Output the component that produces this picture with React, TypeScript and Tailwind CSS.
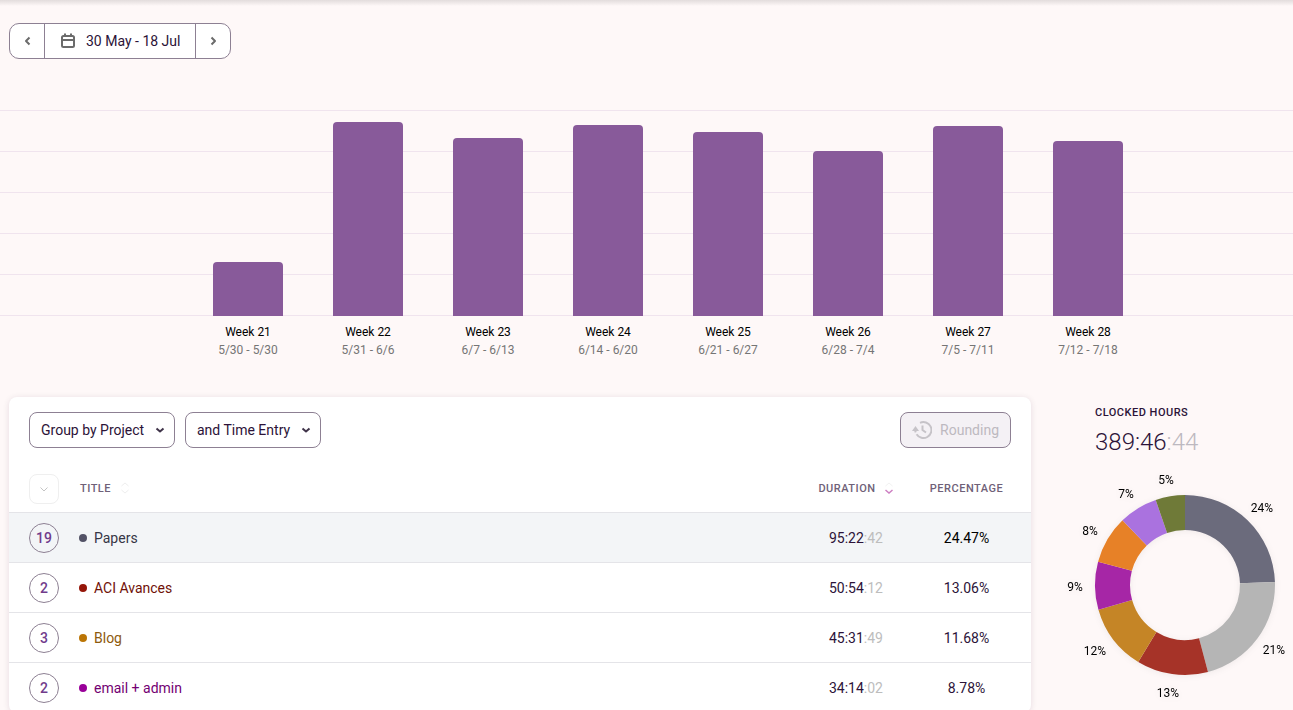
import React from "react";

type Week = { name: string; range: string; height: number };
type Entry = { count: number; title: string; dot: string; text: string; time: string; seconds: string; percent: string; percentColor: string };
type Slice = { label: string; from: number; to: number; color: string; x: number; y: number };

const weeks: Week[] = [
  { name: "Week 21", range: "5/30 - 5/30", height: 54 },
  { name: "Week 22", range: "5/31 - 6/6", height: 194 },
  { name: "Week 23", range: "6/7 - 6/13", height: 178 },
  { name: "Week 24", range: "6/14 - 6/20", height: 191 },
  { name: "Week 25", range: "6/21 - 6/27", height: 184 },
  { name: "Week 26", range: "6/28 - 7/4", height: 165 },
  { name: "Week 27", range: "7/5 - 7/11", height: 190 },
  { name: "Week 28", range: "7/12 - 7/18", height: 175 },
];

const entries: Entry[] = [
  { count: 19, title: "Papers", dot: "bg-[#525266]", text: "text-[#363646]", time: "95:22", seconds: ":42", percent: "24.47%", percentColor: "text-black" },
  { count: 2, title: "ACI Avances", dot: "bg-[#951609]", text: "text-[#701107]", time: "50:54", seconds: ":12", percent: "13.06%", percentColor: "text-[#2c1338]" },
  { count: 3, title: "Blog", dot: "bg-[#bb7505]", text: "text-[#8d5a0d]", time: "45:31", seconds: ":49", percent: "11.68%", percentColor: "text-[#2c1338]" },
  { count: 2, title: "email + admin", dot: "bg-[#990099]", text: "text-[#730073]", time: "34:14", seconds: ":02", percent: "8.78%", percentColor: "text-[#2c1338]" },
];

const slices: Slice[] = [
  { label: "24%", from: 0, to: 88.1, color: "#6b6b7c", x: 231, y: 39 },
  { label: "21%", from: 88.1, to: 165.2, color: "#b5b5b5", x: 243, y: 181 },
  { label: "13%", from: 165.2, to: 211.3, color: "#a63328", x: 137, y: 224 },
  { label: "12%", from: 211.3, to: 254.1, color: "#c58526", x: 64, y: 182 },
  { label: "9%", from: 254.1, to: 285, color: "#a626a6", x: 44, y: 118 },
  { label: "8%", from: 285, to: 316, color: "#e78127", x: 59, y: 62 },
  { label: "7%", from: 316, to: 341, color: "#aa72df", x: 95, y: 25 },
  { label: "5%", from: 341, to: 360, color: "#6f7a38", x: 135, y: 11 },
];

function slicePath(from: number, to: number) {
  const point = (deg: number, r: number) => {
    const a = (deg * Math.PI) / 180;
    return `${(154 + r * Math.sin(a)).toFixed(2)} ${(112 - r * Math.cos(a)).toFixed(2)}`;
  };
  return `M${point(from, 90)}A90 90 0 0 1 ${point(to, 90)}L${point(to, 55)}A55 55 0 0 0 ${point(from, 55)}Z`;
}

function Chevron({ d, className }: { d: string; className: string }) {
  return (
    <svg viewBox="0 0 10 10" className={className} fill="none" stroke="currentColor" strokeLinejoin="round" aria-hidden="true">
      <path d={d} />
    </svg>
  );
}

function DateRange() {
  return (
    <div className="flex h-9 w-max divide-x divide-[#8d8093] overflow-hidden rounded-[10px] border border-[#8d8093] bg-white">
      <button aria-label="Previous period" className="flex w-[35px] items-center justify-center text-[#6b6b6b]">
        <Chevron d="M7.500 1.500 4 5l3.500 3.500" className="size-[10px] stroke-2" />
      </button>
      <button className="flex items-center gap-[10px] px-[15px] text-sm text-[#2c1338]">
        <svg viewBox="0 0 16 16" className="size-4 text-[#6b6b6b]" fill="none" stroke="currentColor" strokeWidth="2" aria-hidden="true">
          <rect x="2" y="3" width="12" height="11" rx="1.500" />
          <path d="M2 7h12M5 0.500v3M11 0.500v3" />
        </svg>
        30 May - 18 Jul
      </button>
      <button aria-label="Next period" className="flex w-[34px] items-center justify-center text-[#6b6b6b]">
        <Chevron d="M3.500 1.500 7 5l-3.500 3.500" className="size-[10px] stroke-2" />
      </button>
    </div>
  );
}

function WeekChart() {
  return (
    <section aria-label="Hours per week" className="mt-[51px] grid">
      <div className="col-start-1 row-start-1 flex flex-col gap-10">
        {[0, 1, 2, 3, 4, 5].map((line) => (
          <div key={line} className="h-px bg-[#f0e4ee]" />
        ))}
      </div>
      <div className="col-start-1 row-start-1 flex justify-center pl-[43px]">
        {weeks.map((week) => (
          <div key={week.name} className="flex w-[120px] flex-col items-center text-xs">
            <div className="flex h-[206px] items-end">
              <div className="w-[70px] rounded-t bg-[#885a9a]" style={{ height: week.height }} />
            </div>
            <div className="mt-[7px] leading-[18px] text-black">{week.name}</div>
            <div className="leading-[18px] text-[#757575]">{week.range}</div>
          </div>
        ))}
      </div>
    </section>
  );
}

function Dropdown({ label, value }: { label: string; value: string }) {
  return (
    <div className="grid items-center">
      <select aria-label={label} className="col-start-1 row-start-1 h-9 appearance-none rounded-[8px] border border-[#8d8093] bg-white pr-[29px] pl-[11px] text-sm text-[#2c1338]">
        <option>{value}</option>
      </select>
      <Chevron d="M1.500 3.500 5 6.500l3.500-3" className="pointer-events-none col-start-1 row-start-1 mr-[10px] size-[10px] justify-self-end stroke-2 text-[#3f3349]" />
    </div>
  );
}

function Toolbar() {
  return (
    <div className="flex gap-[10px] px-5 pt-[15px] pb-[17px]">
      <Dropdown label="Group by" value="Group by Project" />
      <Dropdown label="Then by" value="and Time Entry" />
      <button disabled className="ml-auto flex h-9 items-center gap-2 rounded-[8px] border border-[#8d8093] bg-[#f4f1f5] px-[11px] text-sm text-[#bdb9c0]">
        <svg viewBox="0 0 20 20" className="size-5 text-[#c6c3c8]" fill="none" stroke="currentColor" strokeWidth="2" aria-hidden="true">
          <path d="M8 2.800A8 8 0 1 1 4.600 14.200M3.200 9.500Q3.200 11 3.700 12.300" />
          <path d="M10.500 5.500V10l3.500 2.500" />
          <path d="M3.500 6 0 11h7z" fill="currentColor" stroke="none" />
        </svg>
        Rounding
      </button>
    </div>
  );
}

function EntryTable() {
  return (
    <table className="w-full table-fixed border-separate border-spacing-0 text-sm">
      <thead>
        <tr className="h-12 text-[11px] tracking-[0.5px] text-[#6f6178] *:border-b *:border-[#e4e4e8]">
          <th className="w-[70px] pl-5 text-left">
            <button aria-label="Expand all" className="flex size-[30px] items-center justify-center rounded-[8px] border border-[#efefef] text-[#c4c4c4]">
              <Chevron d="M1.500 3.500 5 7l3.500-3.500" className="size-[10px] stroke-1" />
            </button>
          </th>
          <th className="pl-px text-left font-medium">
            <button className="flex items-center gap-[9px] uppercase">
              Title
              <svg viewBox="0 0 10 12" className="h-3 w-[10px] text-[#eeeeee]" fill="none" stroke="currentColor" aria-hidden="true">
                <path d="M1.500 4 5 1l3.500 3M1.500 8 5 11l3.500-3" />
              </svg>
            </button>
          </th>
          <th className="w-[110px] font-medium">
            <button className="mx-auto flex items-center gap-2 uppercase">
              Duration
              <svg viewBox="0 0 10 12" className="h-3 w-[10px]" fill="none" aria-hidden="true">
                <path d="M1.500 4 5 1l3.500 3" stroke="#f2f2f2" />
                <path d="M1.500 8 5 11l3.500-3" stroke="#cd7fc2" strokeWidth="1.500" />
              </svg>
            </button>
          </th>
          <th className="w-[120px] pr-[9px] text-center font-medium uppercase">Percentage</th>
        </tr>
      </thead>
      <tbody>
        {entries.map((entry) => (
          <tr key={entry.title} className="h-[50px] *:border-b *:border-[#e4e4e8] first:bg-[#f3f5f7]">
            <td className="pl-5">
              <button className="flex size-[30px] items-center justify-center rounded-full border border-[#8d8093] font-medium text-[#713c8c]">{entry.count}</button>
            </td>
            <td>
              <div className={`flex items-center gap-[7px] ${entry.text}`}>
                <span className={`size-2 rounded-full ${entry.dot}`} />
                {entry.title}
              </div>
            </td>
            <td className="text-center text-[#2c1338]">
              {entry.time}
              <span className="text-[#bdbdbd]">{entry.seconds}</span>
            </td>
            <td className={`pr-[9px] text-center ${entry.percentColor}`}>{entry.percent}</td>
          </tr>
        ))}
      </tbody>
    </table>
  );
}

function ClockedHours() {
  return (
    <aside className="w-[262px] shrink-0 pt-[9px]">
      <h2 className="pl-16 text-[11px] leading-[14px] font-medium tracking-[0.5px] text-[#2c1338] uppercase">Clocked hours</h2>
      <p className="mt-2 pl-16 text-2xl leading-7 font-light text-[#2c1338]">
        389:46<span className="text-[#bdb9c0]">:44</span>
      </p>
      <svg viewBox="0 0 262 240" className="mt-[17px] w-full drop-shadow-[0_1px_3px_rgba(0,0,0,0.06)]" role="img" aria-label="Share of hours by project">
        {slices.map((slice) => (
          <g key={slice.label}>
            <path d={slicePath(slice.from, slice.to)} fill={slice.color} />
            <text x={slice.x} y={slice.y} textAnchor="middle" fontSize="12" fill="#000">
              {slice.label}
            </text>
          </g>
        ))}
      </svg>
    </aside>
  );
}

export default function App() {
  return (
    <div className="min-h-screen bg-[#fef8f8] font-['Roboto',sans-serif] text-[#2c1338]">
      <div className="h-[6px] bg-linear-to-b from-[#e2dcdc] to-[#fef8f8]" />
      <div className="px-[9px] pt-[17px]">
        <DateRange />
      </div>
      <WeekChart />
      <div className="mt-[38px] flex items-start pl-[9px]">
        <main className="min-w-0 flex-1 rounded-[8px] bg-white shadow-[0_1px_6px_rgba(60,20,60,0.12)]">
          <Toolbar />
          <EntryTable />
        </main>
        <ClockedHours />
      </div>
    </div>
  );
}
